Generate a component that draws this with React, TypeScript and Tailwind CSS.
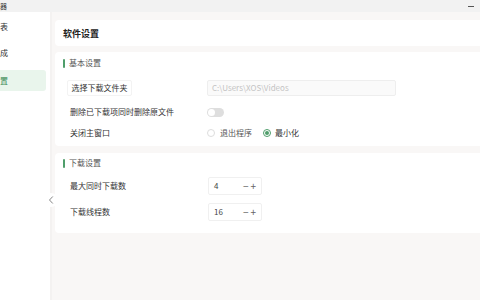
import React from "react";

const font = { fontFamily: '"Noto Sans CJK SC", "Noto Sans", sans-serif' };

function SectionTitle({ children }: { children: React.ReactNode }) {
  return (
    <div className="flex items-center h-[14px] pl-[8px]">
      <span className="w-[2px] h-[9px] bg-[#4f9e6b] rounded-[1px]" />
      <span className="ml-[4px] text-[8px] leading-none text-[#555]">{children}</span>
    </div>
  );
}

function NumberBox({ value }: { value: string }) {
  return (
    <div className="flex items-center w-[54px] h-[18px] border border-[#f0f0f0] bg-white rounded-[2px] pl-[5px] pr-[5px] text-[8px] text-[#444]">
      <span className="flex-1">{value}</span>
      <span className="text-[10px] leading-none text-[#666]">−</span>
      <span className="ml-[2px] text-[10px] leading-none text-[#666]">+</span>
    </div>
  );
}

export default function App() {
  return (
    <div className="w-[480px] h-[300px] flex flex-col overflow-hidden bg-white" style={font}>
      <div className="h-[12px] bg-[#f2f2f2] flex items-center justify-between pr-[6px]">
        <span className="text-[7px] leading-none text-[#333]">器</span>
        <span className="w-[6px] h-[1px] bg-[#555]" />
      </div>
      <div className="flex flex-1 min-h-0">
        <div className="w-[52px] bg-white border-r-[2px] border-[#f4f2f1] flex flex-col pt-[9px]">
          <div className="h-[12px] flex items-center text-[8px] text-[#333]">表</div>
          <div className="h-[13px] mt-[13px] flex items-center text-[8px] text-[#333]">成</div>
          <div className="h-[21px] mt-[11px] w-[46px] bg-[#e9f5ec] rounded-r-[3px] flex items-center text-[8px] text-[#3a8a55]">置</div>
        </div>
        <div className="relative flex-1 bg-[#f9f7f6] pl-[3px] pt-[8px] flex flex-col">
          <div className="h-[26px] bg-white rounded-l-[4px] flex items-center pl-[8px]">
            <span className="text-[9px] font-bold text-[#222] leading-none">软件设置</span>
          </div>
          <div className="mt-[6px] bg-white rounded-l-[4px] pt-[4px] pb-[5px] flex flex-col">
            <SectionTitle>基本设置</SectionTitle>
            <div className="flex items-center h-[16px] mt-[10px]">
              <div className="ml-[12px] w-[65px] h-[16px] flex items-center justify-center border border-[#f3f3f3] rounded-[2px] text-[8px] text-[#333]">选择下载文件夹</div>
              <div className="ml-[75px] w-[189px] h-[16px] flex items-center pl-[4px] bg-[#fafafa] border border-[#eeeeee] rounded-[2px] text-[8px] text-[#c4c4c4]">C:\Users\XOS\Videos</div>
            </div>
            <div className="flex items-center h-[16px] mt-[8px]">
              <span className="ml-[15px] w-[137px] text-[8px] text-[#333]">删除已下载项同时删除原文件</span>
              <span className="w-[17px] h-[9px] rounded-full bg-[#dedede] flex items-center pl-[1px]">
                <span className="w-[7px] h-[7px] rounded-full bg-white" />
              </span>
            </div>
            <div className="flex items-center h-[16px] mt-[5px]">
              <span className="ml-[15px] w-[137px] text-[8px] text-[#333]">关闭主窗口</span>
              <span className="w-[8px] h-[8px] rounded-full border border-[#dddddd] bg-white" />
              <span className="ml-[5px] text-[8px] text-[#555]">退出程序</span>
              <span className="ml-[11px] w-[8px] h-[8px] rounded-full border border-[#4f9e6b] flex items-center justify-center">
                <span className="w-[4px] h-[4px] rounded-full bg-[#4f9e6b]" />
              </span>
              <span className="ml-[4px] text-[8px] text-[#333]">最小化</span>
            </div>
          </div>
          <div className="mt-[7px] bg-white rounded-l-[4px] pt-[3px] pb-[12px] flex flex-col">
            <SectionTitle>下载设置</SectionTitle>
            <div className="flex items-center h-[18px] mt-[7px]">
              <span className="ml-[15px] w-[138px] text-[8px] text-[#333]">最大同时下载数</span>
              <NumberBox value="4" />
            </div>
            <div className="flex items-center h-[18px] mt-[8px]">
              <span className="ml-[15px] w-[138px] text-[8px] text-[#333]">下载线程数</span>
              <NumberBox value="16" />
            </div>
          </div>
          <div className="absolute left-[-8px] top-[181px] w-[14px] h-[14px] rounded-full bg-white flex items-center justify-center">
            <svg width="6" height="8" viewBox="0 0 6 8" fill="none">
              <path d="M4.5 0.8 L1.5 4 L4.5 7.2" stroke="#777" strokeWidth="0.9" strokeLinecap="round" strokeLinejoin="round" />
            </svg>
          </div>
        </div>
      </div>
    </div>
  );
}
